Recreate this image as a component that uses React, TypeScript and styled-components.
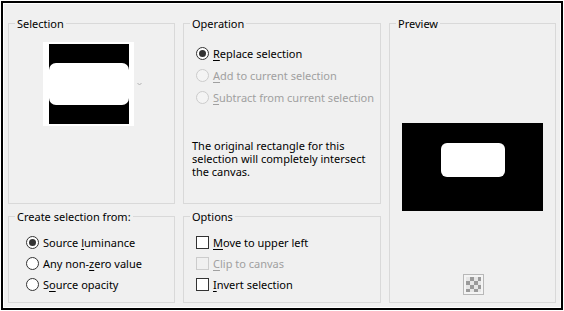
import styled, { createGlobalStyle } from 'styled-components';

const GlobalStyle = createGlobalStyle`
    html, body {
        margin: 0;
        padding: 0;
        background: #ffffff;
    }
    body {
        font-family: "Noto Sans", "Open Sans", sans-serif;
        font-size: 11px;
        color: #000000;
    }
`;

const Frame = styled.div`
    width: 564px;
    height: 311px;
    box-sizing: border-box;
    padding: 1px;
    background: #ffffff;
`;

const Dialog = styled.div`
    height: 100%;
    box-sizing: border-box;
    border: 2px solid #000000;
    background: #f0f0f0;
    box-shadow: inset 0 0 0 1px #ffffff;
    padding: 13px 0 0 5px;
    display: grid;
    grid-template-columns: 167px 198px 167px;
    grid-template-rows: 188px 94px;
    column-gap: 8px;
    row-gap: 5px;
    grid-template-areas:
        'sel op prev'
        'src opt prev';
`;

const Group = styled.fieldset<{ $area: string }>`
    grid-area: ${(p) => p.$area};
    margin: 0;
    padding: 0;
    min-width: 0;
    border: 1px solid #d9d9d9;
    display: flex;
    flex-direction: column;
`;

const Legend = styled.legend`
    margin-left: 6px;
    padding: 0 2px;
    line-height: 15px;
`;

const SelectionBody = styled.div`
    display: flex;
    align-items: center;
    padding: 11px 0 0 34px;
    gap: 3px;
`;

const Thumb = styled.div`
    background: #ffffff;
    padding: 2px 5px 2px 6px;
    display: flex;
`;

const Chevron = styled.svg`
    width: 5px;
    height: 4px;
`;

const OptionList = styled.div<{ $top: number; $left: number; $row: number }>`
    display: flex;
    flex-direction: column;
    padding: ${(p) => p.$top}px 0 0 ${(p) => p.$left}px;

    & > label {
        height: ${(p) => p.$row}px;
    }
`;

const Choice = styled.label<{ $disabled?: boolean }>`
    display: flex;
    align-items: center;
    gap: 4px;
    color: ${(p) => (p.$disabled ? '#a0a0a0' : '#000000')};
    white-space: nowrap;
`;

const Radio = styled.span<{ $checked?: boolean; $disabled?: boolean }>`
    width: 13px;
    height: 13px;
    box-sizing: border-box;
    border-radius: 50%;
    border: 1px solid ${(p) => (p.$disabled ? '#cccccc' : '#333333')};
    background: ${(p) => (p.$disabled ? '#f4f4f4' : '#ffffff')};
    display: flex;
    align-items: center;
    justify-content: center;
    flex: none;

    &::after {
        content: '';
        width: 7px;
        height: 7px;
        border-radius: 50%;
        background: #333333;
        display: ${(p) => (p.$checked ? 'block' : 'none')};
    }
`;

const Check = styled.span<{ $disabled?: boolean }>`
    width: 13px;
    height: 13px;
    box-sizing: border-box;
    border: 1px solid ${(p) => (p.$disabled ? '#cccccc' : '#333333')};
    background: ${(p) => (p.$disabled ? '#f0f0f0' : '#ffffff')};
    flex: none;
`;

const Key = styled.span`
    text-decoration: underline;
    text-underline-offset: 2px;
`;

const Note = styled.p`
    margin: 31px 8px 0 8px;
    line-height: 13px;
`;

const PreviewBody = styled.div`
    flex: 1;
    display: flex;
    flex-direction: column;
    align-items: center;
    padding: 92px 0 7px 0;
`;

const PreviewImage = styled.svg`
    width: 141px;
    height: 88px;
    display: block;
`;

const Spacer = styled.div`
    flex: 1;
`;

const CheckerButton = styled.div`
    width: 21px;
    height: 21px;
    box-sizing: border-box;
    border: 1px solid #b8b8b8;
    padding: 2px;
    background: #f4f4f4;
    margin-left: 1px;
`;

const Checker = styled.div`
    width: 100%;
    height: 100%;
    background: repeating-conic-gradient(#9a9a9a 0 25%, #e6e6e6 0 50%) 0 0 / 8px 8px;
`;

export default function App() {
    return (
        <>
            <GlobalStyle />
            <Frame>
                <Dialog>
                    <Group $area="sel">
                        <Legend>Selection</Legend>
                        <SelectionBody>
                            <Thumb>
                                <svg width="80" height="80" viewBox="0 0 80 80">
                                    <rect width="80" height="80" fill="#000" />
                                    <rect x="0" y="19" width="80" height="42" rx="7" fill="#fff" />
                                </svg>
                            </Thumb>
                            <Chevron viewBox="0 0 5 4">
                                <polyline points="0.5,1 2.5,3 4.5,1" fill="none" stroke="#b0b0b0" strokeWidth="1" />
                            </Chevron>
                        </SelectionBody>
                    </Group>

                    <Group $area="op">
                        <Legend>Operation</Legend>
                        <OptionList $top={11} $left={12} $row={22}>
                            <Choice>
                                <Radio $checked />
                                <span><Key>R</Key>eplace selection</span>
                            </Choice>
                            <Choice $disabled>
                                <Radio $disabled />
                                <span><Key>A</Key>dd to current selection</span>
                            </Choice>
                            <Choice $disabled>
                                <Radio $disabled />
                                <span><Key>S</Key>ubtract from current selection</span>
                            </Choice>
                        </OptionList>
                        <Note>
                            The original rectangle for this
                            <br />
                            selection will completely intersect
                            <br />
                            the canvas.
                        </Note>
                    </Group>

                    <Group $area="prev">
                        <Legend>Preview</Legend>
                        <PreviewBody>
                            <PreviewImage viewBox="0 0 141 88">
                                <rect width="141" height="88" fill="#000" />
                                <rect x="39" y="20" width="64" height="34" rx="6" fill="#fff" />
                            </PreviewImage>
                            <Spacer />
                            <CheckerButton>
                                <Checker />
                            </CheckerButton>
                        </PreviewBody>
                    </Group>

                    <Group $area="src">
                        <Legend>Create selection from:</Legend>
                        <OptionList $top={8} $left={17} $row={21}>
                            <Choice>
                                <Radio $checked />
                                <span>Source <Key>l</Key>uminance</span>
                            </Choice>
                            <Choice>
                                <Radio />
                                <span>Any non-<Key>z</Key>ero value</span>
                            </Choice>
                            <Choice>
                                <Radio />
                                <span>S<Key>o</Key>urce opacity</span>
                            </Choice>
                        </OptionList>
                    </Group>

                    <Group $area="opt">
                        <Legend>Options</Legend>
                        <OptionList $top={8} $left={12} $row={21}>
                            <Choice>
                                <Check />
                                <span><Key>M</Key>ove to upper left</span>
                            </Choice>
                            <Choice $disabled>
                                <Check $disabled />
                                <span><Key>C</Key>lip to canvas</span>
                            </Choice>
                            <Choice>
                                <Check />
                                <span><Key>I</Key>nvert selection</span>
                            </Choice>
                        </OptionList>
                    </Group>
                </Dialog>
            </Frame>
        </>
    );
}
